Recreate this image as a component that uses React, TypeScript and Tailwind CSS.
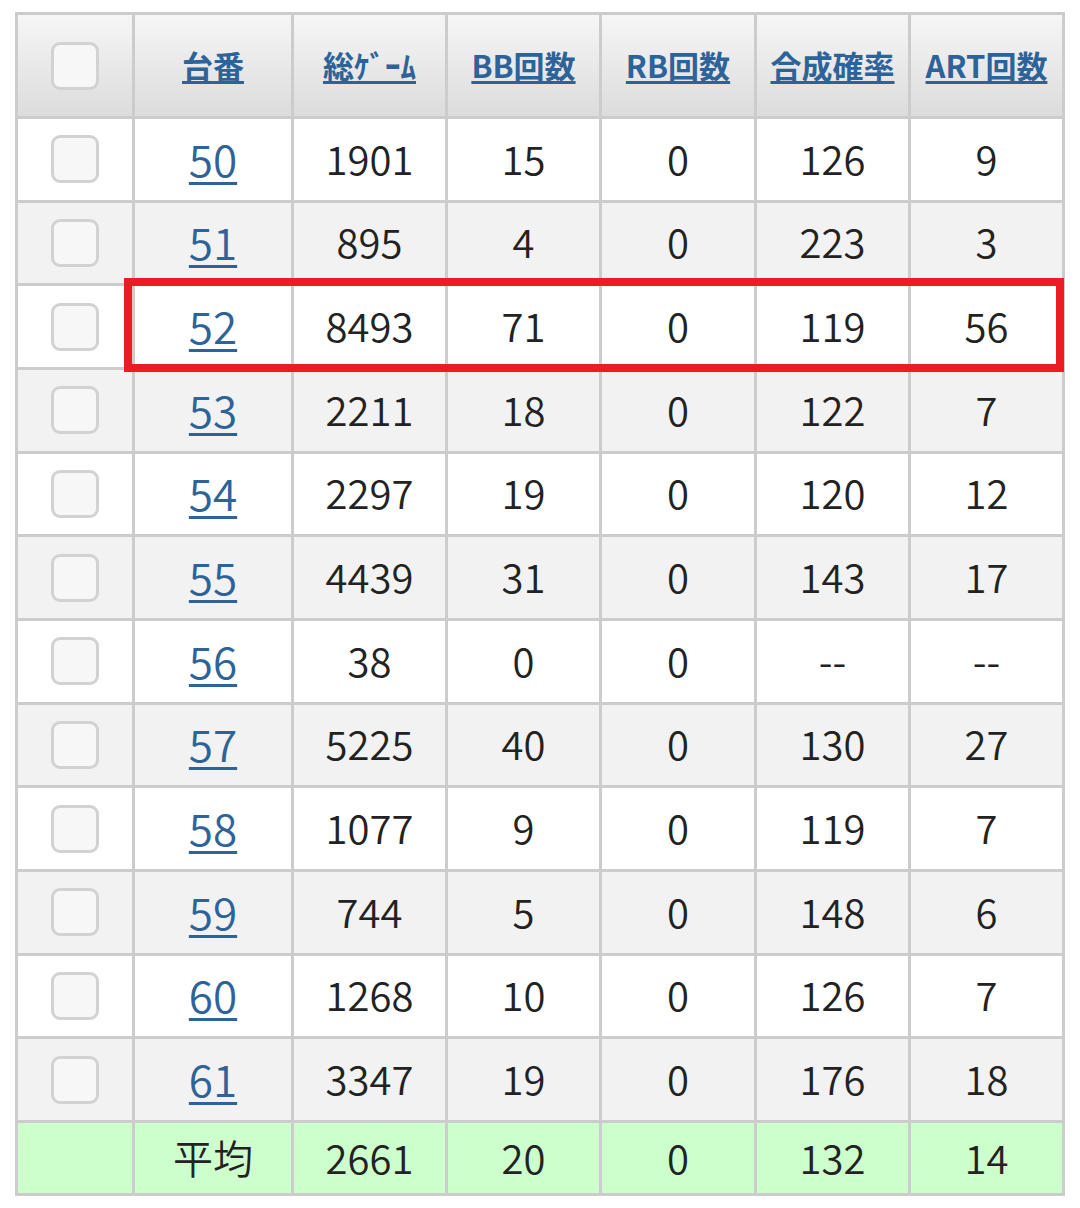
const rows = [
  ["50", "1901", "15", "0", "126", "9"],
  ["51", "895", "4", "0", "223", "3"],
  ["52", "8493", "71", "0", "119", "56"],
  ["53", "2211", "18", "0", "122", "7"],
  ["54", "2297", "19", "0", "120", "12"],
  ["55", "4439", "31", "0", "143", "17"],
  ["56", "38", "0", "0", "--", "--"],
  ["57", "5225", "40", "0", "130", "27"],
  ["58", "1077", "9", "0", "119", "7"],
  ["59", "744", "5", "0", "148", "6"],
  ["60", "1268", "10", "0", "126", "7"],
  ["61", "3347", "19", "0", "176", "18"],
];

const headers = ["台番", "総ｹﾞｰﾑ", "BB回数", "RB回数", "合成確率", "ART回数"];
const average = ["平均", "2661", "20", "0", "132", "14"];

function Checkbox() {
  return (
    <div className="w-[48px] h-[48px] rounded-[9px] border-[3px] border-[#d2d2d2] bg-[#f7f7f7]" />
  );
}

export default function App() {
  return (
    <div
      className="w-[1080px] min-h-[1208px] bg-white pt-[12px] pl-[15px]"
      style={{ fontFamily: '"Noto Sans CJK JP", "Noto Sans", sans-serif' }}
    >
      <div className="relative w-[1050px]">
        <div className="grid grid-cols-[114px_156px_151px_151px_152px_151px_151px] gap-[3px] p-[3px] bg-[#cccccc]">
          {/* Header */}
          <div className="h-[101px] flex items-center justify-center bg-gradient-to-b from-[#f6f6f6] to-[#dcdcdc]">
            <Checkbox />
          </div>
          {headers.map((h) => (
            <div
              key={h}
              className="h-[101px] flex items-center justify-center bg-gradient-to-b from-[#f6f6f6] to-[#dcdcdc]"
            >
              <span className="text-[31px] font-bold text-[#2d6399] underline decoration-[3px] underline-offset-[3px] leading-none -mt-[3px]">
                {h}
              </span>
            </div>
          ))}

          {/* Rows */}
          {rows.map((r, i) => {
            const bg = i % 2 === 0 ? "bg-white" : "bg-[#f2f2f2]";
            return [
              <div key={r[0] + "-cb"} className={`h-[80.67px] flex items-center justify-center ${bg}`}>
                <Checkbox />
              </div>,
              ...r.map((v, j) => (
                <div
                  key={r[0] + "-" + j}
                  className={`h-[80.67px] flex items-center justify-center pb-[3px] ${bg}`}
                >
                  {j === 0 ? (
                    <span className="text-[44px] font-[350] text-[#2d6399] underline decoration-[3px] underline-offset-[5px] leading-none">
                      {v}
                    </span>
                  ) : (
                    <span className="text-[40px] font-[350] text-[#222222] leading-none">{v}</span>
                  )}
                </div>
              )),
            ];
          })}

          {/* Average */}
          <div className="h-[70px] bg-[#ccffcc]" />
          {average.map((v, j) => (
            <div
              key={"avg-" + j}
              className="h-[70px] flex items-center justify-center pb-[2px] bg-[#ccffcc]"
            >
              <span className="text-[40px] font-[350] text-[#222222] leading-none">{v}</span>
            </div>
          ))}
        </div>

        {/* highlight box around row 52 */}
        <div className="absolute left-[109px] top-[266px] w-[940px] h-[94px] border-[8px] border-[#ec1c24] pointer-events-none" />
      </div>
    </div>
  );
}
